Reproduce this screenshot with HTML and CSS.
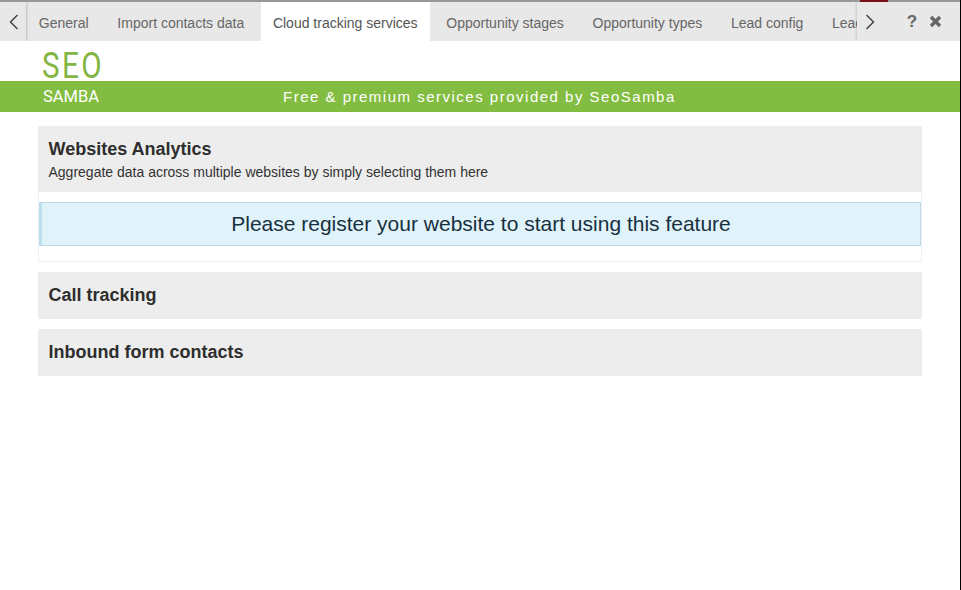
FILE: index.html
```html
<!DOCTYPE html>
<html lang="en">
<head>
<meta charset="utf-8">
<title>Cloud tracking services</title>
<link rel="stylesheet" href="styles.css">
</head>
<body>
<div class="window">
  <div class="topline"><div class="redmark"></div></div>
  <div class="tabbar">
    <div class="tabs">
      <span class="tab">General</span>
      <span class="tab">Import contacts data</span>
      <span class="tab active">Cloud tracking services</span>
      <span class="tab">Opportunity stages</span>
      <span class="tab">Opportunity types</span>
      <span class="tab">Lead config</span>
      <span class="tab">Lead</span>
    </div>
    <div class="nav nav-left">
      <svg width="10" height="16" viewBox="0 0 10 16"><path d="M8.5 1 L1.5 8 L8.5 15" fill="none" stroke="#444" stroke-width="1.5"/></svg>
    </div>
    <div class="nav nav-right">
      <svg class="next" width="10" height="16" viewBox="0 0 10 16"><path d="M1.5 1 L8.5 8 L1.5 15" fill="none" stroke="#444" stroke-width="1.5"/></svg>
      <span class="help">?</span>
      <svg class="close" width="13" height="13" viewBox="0 0 13 13"><path d="M2 2 L11 11 M11 2 L2 11" fill="none" stroke="#666" stroke-width="3.4"/></svg>
    </div>
  </div>
  <div class="brand">
    <div class="logo-top">SEO</div>
    <div class="band">
      <span class="logo-bottom">SAMBA</span>
      <span class="slogan">Free &amp; premium services provided by SeoSamba</span>
    </div>
  </div>
  <main class="content">
    <section class="panel">
      <header class="panel-head tall">
        <h2>Websites Analytics</h2>
        <p>Aggregate data across multiple websites by simply selecting them here</p>
      </header>
      <div class="panel-body">
        <div class="notice">Please register your website to start using this feature</div>
      </div>
    </section>
    <section class="panel">
      <header class="panel-head"><h2>Call tracking</h2></header>
    </section>
    <section class="panel">
      <header class="panel-head"><h2>Inbound form contacts</h2></header>
    </section>
  </main>
</div>
</body>
</html>
```
FILE: styles.css
```css
* { box-sizing: border-box; }
html, body { margin: 0; padding: 0; background: #fff; }
body { width: 961px; height: 590px; overflow: hidden; font-family: "Liberation Sans", Arial, sans-serif; color: #2b2b2b; }
.window { width: 961px; height: 590px; border-right: 1px solid #000; overflow: hidden; }
.topline { height: 2px; background: #989898; }
.redmark { width: 28px; height: 2px; margin-left: 860px; background: #7a0f1c; }
.tabbar { position: relative; height: 39px; background: #e8e8e8; overflow: hidden; }
.tabs { display: flex; padding-left: 26px; height: 39px; white-space: nowrap; }
.tab { padding: 0 12.85px; margin-right: 3px; line-height: 43px; font-size: 14px; color: #666; }
.tab.active { background: #fff; color: #555; height: 39px; margin-left: .5px; padding-left: 12.35px; }
.nav { position: absolute; top: 0; height: 39px; background: #e8e8e8; display: flex; align-items: center; }
.nav-left { left: 0; width: 26px; padding-left: 9px; box-shadow: 1px 0 2px rgba(0,0,0,.18); }
.nav-right { left: 857px; width: 103px; padding-left: 8px; box-shadow: -1px 0 2px rgba(0,0,0,.12); }
.next { flex: none; }
.help { margin-left: 31px; width: 12px; font-size: 17px; line-height: 20px; font-weight: 700; color: #666; text-align: center; }
.close { margin-left: 11px; }
.brand { position: relative; height: 71px; }
.logo-top { height: 40px; padding-left: 42px; font-family: "Roboto", sans-serif; font-size: 37px; line-height: 49px; font-weight: 400; letter-spacing: 3px; color: #82b541; transform: scaleX(.8); transform-origin: 42px 25px; }
.band { display: flex; align-items: center; height: 31px; background: #82bd41; color: #fff; }
.logo-bottom { width: 283px; padding-left: 43px; font-family: "Roboto", sans-serif; font-size: 16.5px; line-height: 31px; }
.slogan { font-size: 15px; letter-spacing: 1.5px; }
.content { padding: 14px 38px 0 38px; display: flex; flex-direction: column; gap: 10px; }
.panel-head { background: #ededed; height: 47px; padding: 13px 10.5px 0; }
.panel-head.tall { height: 66px; }
.panel-head h2 { margin: 0; font-size: 18px; line-height: 21px; font-weight: 700; color: #2e2e2e; }
.panel-head p { margin: 4px 0 0; font-size: 14px; line-height: 17px; color: #333; }
.panel-body { height: 70px; padding: 10px 0 0 0; border: 1px solid #eee; border-top: 0; }
.notice { height: 44px; line-height: 42px; background: #e1f3fa; border: 1px solid #bcdde8; border-left: 3px solid #bcdfef; color: #17303f; font-size: 21px; text-align: center; }
```
